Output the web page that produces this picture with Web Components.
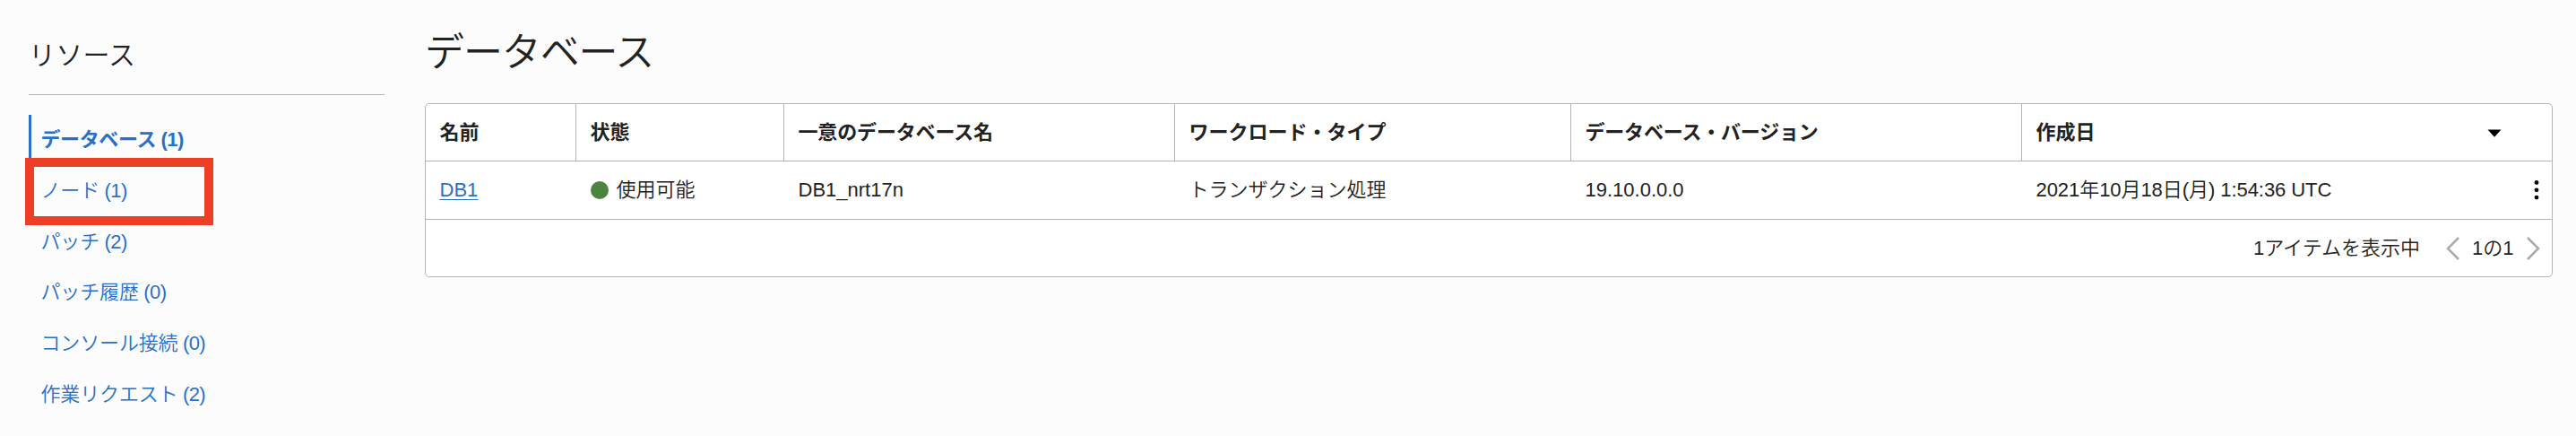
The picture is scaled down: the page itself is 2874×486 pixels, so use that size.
<!DOCTYPE html>
<html lang="ja">
<head>
<meta charset="utf-8">
<title>データベース</title>
<style>
    body{
        margin: 0;
        height: 486px;
        background: #fcfcfc;
        color: #222;
        font: 22px/30px "Liberation Sans", "Noto Sans CJK JP", sans-serif;
        overflow: hidden;
    }
</style>
</head>
<body>
<resource-page>
    <resource-nav slot="nav" heading="リソース">
        <resource-link active style="--track:-0.4px" count="(1)">データベース</resource-link>
        <resource-link marked count="(1)">ノード</resource-link>
        <resource-link count="(2)">パッチ</resource-link>
        <resource-link count="(0)">パッチ履歴</resource-link>
        <resource-link count="(0)">コンソール接続</resource-link>
        <resource-link count="(2)">作業リクエスト</resource-link>
    </resource-nav>
    <database-table heading="データベース"></database-table>
</resource-page>

<script>
class ResourcePage extends HTMLElement{

    constructor(){
        super();
        this.attachShadow({mode: "open"});
        this.shadowRoot.innerHTML=`
        <style>
            :host{
                display: grid;
                grid-template-columns: 397px 2374px;
                column-gap: 45px;
                align-items: start;
                padding-left: 32px;
            }
        </style>
        <slot name="nav"></slot>
        <slot></slot>`;
    }
}

class ResourceNav extends HTMLElement{

    constructor(){
        super();
        this.attachShadow({mode: "open"});
        this.shadowRoot.innerHTML=`
        <style>
            :host{
                display: block;
            }
            h2{
                box-sizing: border-box;
                height: 106px;
                margin: 0 0 22px;
                padding-top: 42px;
                border-bottom: 1px solid #b0b4bb;
                font-size: 30px;
                font-weight: 350;
                line-height: 40px;
                letter-spacing: 0.2px;
            }
            nav{
                display: flex;
                flex-direction: column;
            }
        </style>
        <h2>${this.getAttribute("heading")}</h2>
        <nav><slot></slot></nav>`;
    }
}

class ResourceLink extends HTMLElement{

    constructor(){
        super();
        this.attachShadow({mode: "open"});
        this.shadowRoot.innerHTML=`
        <style>
            :host{
                display: flex;
                align-items: center;
                position: relative;
                height: 56.7px;
                color: #2870c8;
                font-weight: 350;
            }
            a{
                padding-left: 13.5px;
                white-space: pre;
            }
            .name{
                letter-spacing: var(--track, -0.15px);
            }
            .count{
                letter-spacing: -0.6px;
            }
            :host([active]){
                font-weight: bold;
            }
            :host([active])::before{
                content: "";
                width: 3px;
                height: 100%;
                margin-right: -3px;
                background: #2870c8;
            }
            /* red frame laid over the row */
            :host([marked])::after{
                content: "";
                position: absolute;
                box-sizing: border-box;
                left: -4px;
                top: -8.7px;
                width: 210px;
                height: 75px;
                border: 10px solid #eb4025;
            }
        </style>
        <a><span class="name"><slot></slot></span><span class="count"> ${this.getAttribute("count")}</span></a>`;
    }
}

class DatabaseTable extends HTMLElement{

    constructor(){
        super();
        this.attachShadow({mode: "open"});
        this.shadowRoot.innerHTML=`
        <style>
            :host{
                display: block;
            }
            h1{
                height: 115px;
                margin: 0;
                padding-top: 29px;
                box-sizing: border-box;
                font-size: 44px;
                font-weight: 350;
                line-height: 60px;
                letter-spacing: -1.1px;
            }
            .table{
                box-sizing: border-box;
                height: 194px;
                border: 1px solid #b0b4bb;
                border-radius: 5px;
                background: #fff;
            }
            .row{
                display: grid;
                grid-template-columns: 168px 232px 436px 442px 503px 1fr;
                box-sizing: border-box;
                height: 65px;
                border-bottom: 1px solid #b0b4bb;
            }
            .head{
                height: 64px;
                font-weight: bold;
            }
            .row > div{
                display: flex;
                align-items: center;
                box-sizing: border-box;
                padding-left: 15.5px;
                white-space: nowrap;
            }
            .head > div:not(:last-child){
                border-right: 1px solid #b0b4bb;
            }
            .data, .foot{
                font-weight: 350;
            }
            .data a{
                color: #2870c8;
                text-decoration: underline;
                text-decoration-thickness: 1px;
                text-underline-offset: 3px;
            }
            .dot{
                width: 20px;
                height: 20px;
                margin-right: 9px;
                border-radius: 50%;
                background: #4b8340;
            }
            .unique{
                letter-spacing: -0.15px;
            }
            .version{
                letter-spacing: -0.2px;
            }
            .date{
                letter-spacing: -0.06px;
            }
            .sort{
                margin-left: auto;
                margin-right: 56px;
            }
            .menu{
                margin-left: auto;
                margin-right: 14px;
            }
            .foot{
                display: flex;
                align-items: center;
                justify-content: flex-end;
                height: 64px;
                padding-right: 13px;
            }
            .prev{
                margin: 0 14px 0 29px;
            }
            .next{
                margin-left: 14.5px;
            }
            svg{
                display: block;
                flex: none;
            }
        </style>
        <h1>${this.getAttribute("heading")}</h1>
        <div class="table">
            <div class="row head">
                <div><span>名前</span></div>
                <div><span>状態</span></div>
                <div><span class="unique">一意のデータベース名</span></div>
                <div><span>ワークロード・タイプ</span></div>
                <div><span class="version">データベース・バージョン</span></div>
                <div><span>作成日</span>
                    <svg class="sort" width="16" height="10"><path d="M.5 1.5h15L8 9.7z"/></svg>
                </div>
            </div>
            <div class="row data">
                <div><a>DB1</a></div>
                <div><span class="dot"></span><span>使用可能</span></div>
                <div><span>DB1_nrt17n</span></div>
                <div><span>トランザクション処理</span></div>
                <div><span>19.10.0.0.0</span></div>
                <div><span class="date">2021年10月18日(月) 1:54:36 UTC</span>
                    <svg class="menu" width="6" height="24"><circle cx="3" cy="3.5" r="2.4"/><circle cx="3" cy="11.8" r="2.4"/><circle cx="3" cy="20.1" r="2.4"/></svg>
                </div>
            </div>
            <div class="foot">
                <span>1アイテムを表示中</span>
                <svg class="prev" width="15" height="26" fill="none" stroke="#aaa" stroke-width="2.5"><path d="M14 1L2 13l12 12"/></svg>
                <span>1の1</span>
                <svg class="next" width="15" height="26" fill="none" stroke="#aaa" stroke-width="2.5"><path d="M1 1l12 12L1 25"/></svg>
            </div>
        </div>`;
    }
}

customElements.define("resource-page", ResourcePage);
customElements.define("resource-nav", ResourceNav);
customElements.define("resource-link", ResourceLink);
customElements.define("database-table", DatabaseTable);
</script>
</body>
</html>
